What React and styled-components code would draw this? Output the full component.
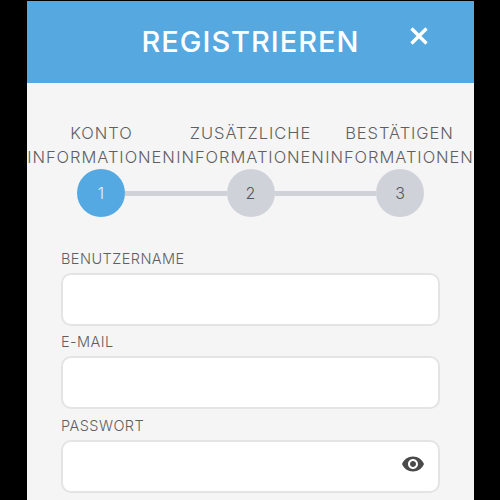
import React from 'react'
import styled, {createGlobalStyle} from 'styled-components'
import {MdRemoveRedEye} from 'react-icons/md'

var Global = createGlobalStyle`
  html, body {
    margin: 0;
    height: 500px;
    overflow: hidden;
    background: #000;
  }
  body {
    font-family: Inter, "Open Sans", sans-serif;
  }
`

var Panel = styled.div`
  width: 447px;
  height: 499px;
  margin: 1px 0 0 27px;
  background: #f5f5f6;
  overflow: hidden;
`

var Header = styled.header`
  position: relative;
  height: 82px;
  background: #56a8e0;
  color: #fff;
  display: flex;
  align-items: center;
  justify-content: center;
`

var Title = styled.h1`
  margin: 0 0 1px;
  font-size: 29px;
  font-weight: 500;
  letter-spacing: 1px;
`

var Close = styled.button`
  position: absolute;
  top: 23px;
  right: 43px;
  width: 24px;
  height: 24px;
  padding: 0;
  border: 0;
  background: none;
  color: #fff;
  svg { display: block; }
`

var Steps = styled.div`
  display: grid;
  grid-template-columns: repeat(3, 149px);
  padding-top: 38px;
`

var StepName = styled.div`
  text-align: center;
  color: #5f5f63;
  font-size: 16.5px;
  font-weight: 300;
  letter-spacing: 0.95px;
  line-height: 24px;
  height: 48px;
  white-space: nowrap;
`

var Track = styled.div`
  display: flex;
  align-items: center;
  padding: 0 50px;
`

var Circle = styled.div`
  flex: none;
  width: 48px;
  height: 48px;
  border-radius: 50%;
  display: flex;
  align-items: center;
  justify-content: center;
  font-size: 16px;
  font-weight: 300;
  background: ${p => p.$active ? '#54a9e2' : '#d0d2da'};
  color: ${p => p.$active ? '#e6f2fb' : '#55565c'};
`

var Line = styled.div`
  flex: 1;
  height: 5px;
  background: #d0d2da;
`

var Form = styled.form`
  padding: 32px 34px 0 34px;
`

var Label = styled.label`
  display: block;
  color: #5f5f63;
  font-size: 14.5px;
  font-weight: 300;
  letter-spacing: 0.45px;
  line-height: 20px;
  margin-bottom: 4px;
`

var Field = styled.div`
  position: relative;
  box-sizing: border-box;
  width: 379px;
  height: 53px;
  margin-bottom: 6.3px;
  background: #fff;
  border: 2.5px solid #e4e4e4;
  border-radius: 10px;
`

var Eye = styled.span`
  position: absolute;
  top: 10px;
  right: 13px;
  color: #4a4a4a;
  line-height: 0;
`

var steps = [
  {first: 'KONTO', n: 1},
  {first: 'ZUSÄTZLICHE', n: 2},
  {first: 'BESTÄTIGEN', n: 3}
]

export default function App () {
  return (
    <Panel>
      <Global />
      <Header>
        <Title>REGISTRIEREN</Title>
        <Close aria-label='close'>
          <svg width='24' height='24' viewBox='0 0 24 24'>
            <path d='M4.5 4.5 L19.5 19.5 M19.5 4.5 L4.5 19.5' stroke='currentColor' strokeWidth='3.4' fill='none' />
          </svg>
        </Close>
      </Header>
      <Steps>
        {steps.map((s) => (
          <StepName key={s.n}>{s.first}<br />INFORMATIONEN</StepName>
        ))}
      </Steps>
      <Track>
        <Circle $active>1</Circle>
        <Line />
        <Circle>2</Circle>
        <Line />
        <Circle>3</Circle>
      </Track>
      <Form>
        <Label>BENUTZERNAME</Label>
        <Field />
        <Label>E-MAIL</Label>
        <Field />
        <Label>PASSWORT</Label>
        <Field>
          <Eye><MdRemoveRedEye size={24} /></Eye>
        </Field>
      </Form>
    </Panel>
  )
}
